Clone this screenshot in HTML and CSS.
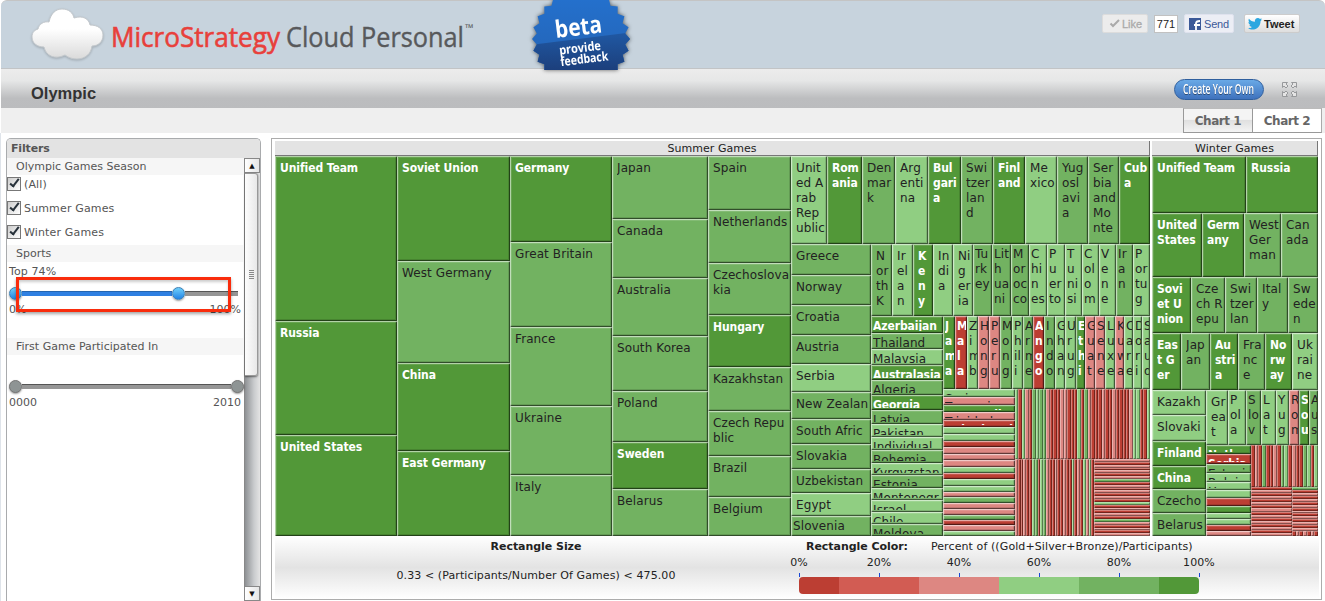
FILE: index.html
```html
<!DOCTYPE html>
<html lang="en">
<head>
<meta charset="utf-8">
<title>Olympic</title>
<link rel="stylesheet" href="styles.css">
</head>
<body>
<header class="brandbar">
  <svg class="cloud" width="74" height="54" viewBox="0 0 74 54">
    <defs><linearGradient id="cg" x1="0" y1="0" x2="0" y2="1"><stop offset="0.4" stop-color="#fff"/><stop offset="1" stop-color="#dadada"/></linearGradient></defs>
    <path d="M18 14C20 5 25 1 31 1C38 1 42 5 43 10C52 7 58 11 59 17C67 17 72 21 72 27C72 34 67 38 61 38C60 46 54 51 46 51C42 51 38 50 34 47C24 52 15 48 13 39C6 39 1 35 1 29C1 24 4 22 7 21C8 16 13 13 18 14Z" fill="url(#cg)" stroke="#c3c8cc" stroke-width="1"/>
  </svg>
  <svg class="wordmark" width="370" height="44" viewBox="0 0 370 44">
    <text x="1" y="30" class="wm red" textLength="169" lengthAdjust="spacingAndGlyphs">MicroStrategy</text>
    <text x="176" y="30" class="wm gray" textLength="178" lengthAdjust="spacingAndGlyphs">Cloud Personal</text>
    <text x="355" y="15" class="tm">™</text>
  </svg>
  <svg class="badge" width="104" height="70" viewBox="0 0 104 70">
    <defs><linearGradient id="bg1" x1="0" y1="0" x2="0" y2="1"><stop offset="0" stop-color="#2470cc"/><stop offset="1" stop-color="#2463b4"/></linearGradient>
    <linearGradient id="bg2" x1="0" y1="0" x2="0" y2="1"><stop offset="0" stop-color="#2059a4"/><stop offset="1" stop-color="#1c3f7c"/></linearGradient>
    <clipPath id="burst"><polygon id="burstShape"/></clipPath></defs>
    <g clip-path="url(#burst)"><rect width="104" height="70" fill="url(#bg1)"/><path d="M0 45L104 32V70H0Z" fill="url(#bg2)"/></g>
    <g transform="rotate(-7 52 40)" class="badgetext">
      <text x="27.500" y="35" font-size="24" textLength="47" lengthAdjust="spacingAndGlyphs">beta</text>
      <text x="29" y="52" font-size="12.500" textLength="42" lengthAdjust="spacingAndGlyphs">provide</text>
      <text x="29" y="63.500" font-size="12.500" textLength="48" lengthAdjust="spacingAndGlyphs">feedback</text>
    </g>
  </svg>
  <div class="social">
    <span class="like"><svg width="11" height="9" viewBox="0 0 11 9"><path d="M1.500 4.500L4 7L10 1" fill="none" stroke="#aaa" stroke-width="2"/></svg>Like</span>
    <span class="count">771</span>
    <span class="send"><svg width="12" height="12" viewBox="0 0 12 12"><rect width="12" height="12" fill="#3b5998"/><path d="M7 12V5.500C7 3.500 8 3 11 3M5 7H11" fill="none" stroke="#fff" stroke-width="1.800"/></svg>Send</span>
    <span class="tweet"><svg width="14" height="12" viewBox="0 0 14 12"><path d="M14 1.500L12.500 3.200C12.600 8 9 11.500 4.500 11.500C2.800 11.500 1.200 11 0 10.200C1.600 10.300 3 9.800 4 9C2.700 8.900 1.700 8.100 1.400 7H2.600C1.200 6.600.4 5.500.4 4.100L1.600 4.500C.5 3.500.2 2 .9.700C2.400 2.500 4.500 3.600 6.900 3.700C6.500 1.500 8 0 9.900 0C10.700 0 11.500.3 12 .9L13.700.3L12.900 1.700Z" fill="#2ca7e0"/></svg>Tweet</span>
  </div>
</header>
<div class="titlebar">
  <h1>Olympic</h1>
  <div class="create"><svg width="76" height="19" viewBox="0 0 76 19"><text x="2" y="14" textLength="71" lengthAdjust="spacingAndGlyphs">Create Your Own</text></svg></div>
  <svg class="expand" width="15" height="15" viewBox="0 0 15 15"><g fill="#e4e4e4" stroke="#97999b" stroke-width="1"><path id="ar" d="M.5 .5H5.500L4 2L6 4L4 6L2 4L.5 5.500Z"/><use href="#ar" transform="matrix(-1 0 0 1 15 0)"/><use href="#ar" transform="matrix(1 0 0 -1 0 15)"/><use href="#ar" transform="matrix(-1 0 0 -1 15 15)"/></g></svg>
</div>
<nav class="tabs"><span class="tab">Chart 1</span><span class="tab active">Chart 2</span></nav>
<main>
  <aside class="filters">
    <h2>Filters</h2>
    <div class="fbody">
      <div class="fcontent">
        <div class="sec">Olympic Games Season</div>
        <div class="check"><i class="box"></i>(All)</div>
        <div class="check"><i class="box"></i>Summer Games</div>
        <div class="check"><i class="box"></i>Winter Games</div>
        <div class="sec">Sports</div>
        <div class="top">Top 74%</div>
        <div class="slider blue"><b class="knob"></b><span class="filled"></span><b class="knob"></b><span class="rest"></span></div>
        <div class="ends pct"><span>0%</span><span>100%</span></div>
        <div class="sec">First Game Participated In</div>
        <div class="slider gray2"><b class="knob"></b><span class="rest"></span><b class="knob"></b></div>
        <div class="ends"><span>0000</span><span>2010</span></div>
        <div class="highlight"></div>
      </div>
      <div class="scroll"><div class="sbtn">▲</div><div class="thumb"><i></i><i></i><i></i><i></i><i></i></div><div class="sspace"></div><div class="sbtn">▼</div></div>
    </div>
  </aside>
  <section class="chart">
    <div class="maps">
      <div class="group summer"><div class="ghead">Summer Games</div><div class="map" id="summer"></div></div>
      <div class="group winter"><div class="ghead">Winter Games</div><div class="map" id="winter"></div></div>
    </div>
    <footer class="legend">
      <div class="lsize"><b>Rectangle Size</b><span>0.33 &lt; (Participants/Number Of Games) &lt; 475.00</span></div>
      <div class="lcolor">
        <div class="ltitle"><b>Rectangle Color:</b><span class="formula">Percent of ((Gold+Silver+Bronze)/Participants)</span></div>
        <div class="ticks"><span>0%</span><span>20%</span><span>40%</span><span>60%</span><span>80%</span><span>100%</span></div>
        <div class="bar"><i class="s r"></i><i class="m"></i><i class="p"></i><i class="l"></i><i class="g"></i><i class="s d"></i></div>
      </div>
    </footer>
  </section>
</main>
<script src="treemap.js"></script>
</body>
</html>
```
FILE: styles.css
```css
* { box-sizing: border-box; }
body { margin: 0; width: 1325px; height: 601px; overflow: hidden; background: #fff; font-family: "DejaVu Sans", Verdana, sans-serif; font-size: 11px; color: #555; display: flex; flex-direction: column; }
svg { display: block; }

.brandbar { margin-left: 1px; height: 69px; flex: none; background: #c7d3dd; border-top: 1px solid #c4c4c4; border-bottom: 1px solid #c2c4c6; border-radius: 6px 6px 0 0; display: flex; align-items: flex-start; }
.cloud { margin: 7px 0 0 30px; filter: drop-shadow(0 1px 1px rgba(0,0,0,.2)); }
.wordmark { margin: 16px 0 0 5px; overflow: visible; }
.wm { font-family: "Open Sans", sans-serif; font-size: 28px; }
.red { fill: #e8403b; stroke: #e8403b; stroke-width: .6px; }
.gray { fill: #58595b; stroke: #58595b; stroke-width: .4px; }
.tm { font: 11px "Open Sans", sans-serif; fill: #58595b; }
.badge { margin: -1px 0 0 49px; filter: drop-shadow(0 0 2px rgba(0,0,0,.6)); height: 70px; overflow: hidden; }
.badgetext { font-family: "Open Sans", sans-serif; font-weight: bold; fill: #fff; }
.social { margin: 13px 0 0 469px; display: flex; align-items: flex-start; font-family: "Liberation Sans", Arial, sans-serif; font-size: 11px; line-height: 18px; }
.social span { display: flex; align-items: center; border-radius: 2px; height: 19px; }
.like { width: 46px; background: #ececec; border: 1px solid #dcdcdc; color: #aaa; gap: 2px; padding-left: 6px; -webkit-text-stroke: .3px #aaa; }
.social .count { margin-left: 6px; width: 24px; height: 18px; margin-top: 1px; background: #fff; border: 1px solid #c1c1c1; color: #222; border-radius: 0; justify-content: center; }
.send { margin-left: 6px; width: 50px; background: #eceef5; border: 1px solid #dfe2ee; color: #3b5998; gap: 3px; padding-left: 4px; letter-spacing: -.2px; }
.tweet { margin-left: 10px; width: 56px; background: linear-gradient(#fff, #dedede); border: 1px solid #ccc; color: #222; font-weight: bold; gap: 2px; padding-left: 3px; }

.titlebar { margin-left: 1px; height: 39px; flex: none; background: linear-gradient(#ececec 0, #e6e7e7 30%, #bcbdbf 75%, #bbbcbe 100%); display: flex; align-items: flex-start; }
h1 { margin: 14px 0 0 30px; width: 1143px; font: bold 16.5px/20px "Liberation Sans", Arial, sans-serif; color: #333; }
.create { margin-top: 10px; width: 90px; height: 21px; border-radius: 11px; border: 1px solid #2f5f9e; background: linear-gradient(#69a9e6, #3f72bd); display: flex; justify-content: center; }
.create text { font: 600 14px "Open Sans", sans-serif; fill: #fff; }
.create svg { filter: drop-shadow(0 1px 0 rgba(0,0,0,.4)); }
.expand { margin: 13px 0 0 18px; }

.tabs { height: 25px; flex: none; margin-left: 1px; background: #efefef; display: flex; padding-left: 1182px; font-size: 12px; font-weight: bold; color: #666; }
.tab { width: 70px; height: 25px; line-height: 24px; text-align: center; background: linear-gradient(#f4f4f4 0, #f4f4f4 45%, #e0e0e0 50%, #f4f4f4 100%); border: 1px solid #999; border-top-color: #bbb; letter-spacing: -.45px; }
.tab.active { width: 69px; background: #fff; border-left: 0; border-right-color: #aaa; }

main { flex: 1; display: flex; align-items: flex-start; border-left: 1px solid #dfe4ea; padding: 5px 0 0 5px; min-height: 0; }
.filters { width: 255px; height: 463px; border: 1px solid #a9abad; border-bottom: 0; border-radius: 5px 5px 0 0; overflow: hidden; display: flex; flex-direction: column; background: #fff; flex: none; }
h2 { margin: 0; height: 19px; flex: none; background: #e3e3e3; font-size: 11px; line-height: 19px; padding-left: 4px; color: #555; letter-spacing: -.15px; }
.fbody { flex: 1; display: flex; min-height: 0; }
.fcontent { width: 237px; position: relative; letter-spacing: .15px; }
.sec { height: 17px; line-height: 18px; padding-left: 9px; background: #f6f6f6; margin-bottom: 2px; letter-spacing: 0; }
.sec + .gray2 { letter-spacing: 0; }
.check { height: 24px; display: flex; align-items: flex-start; line-height: 15px; gap: 3px; }
.check .box { width: 14px; height: 14px; border: 1px solid #777; background: linear-gradient(135deg, #ccc, #fff); position: relative; }
.check .box::after { content: ""; position: absolute; left: 4px; top: -1px; width: 3px; height: 8px; border: solid #27313a; border-width: 0 2px 2px 0; transform: rotate(38deg); }
.check + .sec { margin-top: -4px; }
.top { padding-left: 2px; line-height: 15px; letter-spacing: .1px; }
.slider { display: flex; align-items: center; height: 14px; margin: 7px 0 0 2px; }
.knob { width: 13px; height: 13px; border-radius: 50%; flex: none; border: 1px solid #777; background: #8e9494; box-shadow: 0 1px 2px rgba(0,0,0,.4); }
.blue .knob { background: linear-gradient(#6fd0fb, #2283e6); border-color: #3a7fb5; }
.filled { width: 150px; height: 5px; background: #2f80e2; border-top: 1px solid #2565b0; }
.rest { flex: 1; height: 5px; background: #969696; border-top: 1px solid #555; }
.blue { padding-right: 6px; }
.ends { display: flex; justify-content: space-between; padding: 0 3px 0 2px; line-height: 15px; margin-top: 2px; letter-spacing: 0; }
.pct { margin-bottom: 21px; }
.gray2 { margin-top: 24px; margin-bottom: 1px; }
.highlight { position: absolute; left: 9px; top: 119px; width: 215px; height: 35px; border: 3px solid #f92c0c; box-shadow: 0 2px 3px rgba(0,0,0,.35), inset 0 2px 3px rgba(0,0,0,.2); }
.scroll { width: 16px; display: flex; flex-direction: column; background: linear-gradient(90deg, #8e9194, #c9cbcd 60%, #e4e4e4); border-left: 1px solid #888; }
.sbtn { height: 15px; flex: none; border: 1px solid #888; border-left: 0; background: linear-gradient(90deg, #fff, #e6e6e6); font-size: 7px; line-height: 14px; text-align: center; color: #111; }
.thumb { width: 13px; height: 203px; border: 1px solid #999; border-left: 0; border-radius: 0 3px 3px 0; background: linear-gradient(90deg, #fdfdfd, #e8e8e8); box-shadow: 0 1px 2px rgba(0,0,0,.5); display: flex; flex-direction: column; gap: 1px; align-items: center; justify-content: center; }
.thumb i { width: 5px; height: 1px; background: #888; }
.sspace { flex: 1; }

.chart { margin-left: 10px; width: 1051px; height: 462px; flex: none; border: 1px solid #acacac; padding: 2px 2px 0 3px; display: flex; flex-direction: column; color: #222; }
.maps { display: flex; gap: 2px; height: 395px; flex: none; }
.group { display: flex; flex-direction: column; }
.summer { width: 875px; }
.winter { width: 166px; }
.ghead { height: 15px; background: #e3e3e3; border-bottom: 1px solid #777; border-right: 1px solid #777; text-align: center; font-size: 11px; line-height: 15px; flex: none; letter-spacing: .05px; }
.map { flex: 1; display: flex; min-height: 0; font-size: 12px; line-height: 15px; }
.cols, .rows { display: flex; min-width: 0; min-height: 0; overflow: hidden; }
.rows { flex-direction: column; }
.cell { min-width: 0; min-height: 0; overflow: hidden; display: flex; box-shadow: inset 1px 1px 0 rgba(255,255,255,.5), inset -1px -1px 0 rgba(0,0,0,.5), inset 2px 2px 0 rgba(255,255,255,.12), inset -2px -2px 0 rgba(0,0,0,.13); }
.label { overflow: hidden; white-space: pre; flex: 1; letter-spacing: .1px; margin: 5px 1px 1px 5px; }
.bold .label { letter-spacing: -.08px; }
.tight .label { margin: 3px 1px 2px 2px; }
.stripe { box-shadow: inset 1px 1px 0 rgba(255,255,255,.35), inset -1px -1px 0 rgba(0,0,0,.4); }
.bold { font-family: "DejaVu Sans Condensed", "DejaVu Sans", sans-serif; font-stretch: condensed; font-weight: bold; color: #fff; }
.d { background: #529838; }
.g { background: #72b261; }
.l { background: #90ce82; }
.p { background: #dd8782; }
.m { background: #d25c53; }
.r { background: #bc3e33; }

.legend { flex: 1; display: flex; background: linear-gradient(#fff, #e3e3e3 50%, #fff); letter-spacing: .1px; }
.lsize { width: 522px; display: flex; flex-direction: column; align-items: center; }
.lsize b, .ltitle { line-height: 22px; height: 20px; letter-spacing: -.05px; }
.lsize span { line-height: 20px; margin-top: 10px; }
.lcolor { width: 404px; padding: 0 2px; }
.ltitle { display: flex; padding-left: 7px; gap: 23px; }
.formula { letter-spacing: .1px; }
.ticks { display: flex; justify-content: space-between; margin: -4px -20px 0; }
.ticks span { width: 40px; height: 25px; line-height: 21px; text-align: center; background: linear-gradient(#1747d6, #1747d6) 50% 100% / 1px 4px no-repeat; }
.bar { display: flex; height: 17px; border-radius: 4px; overflow: hidden; }
.bar i { flex: 80; }
.bar .s { flex: 40; }
```
FILE: treemap.js
```js
// Leaf: [end, colour, label, style]; branch: {end, dir, kids}. Each "end" is the
// edge of the item along its parent's axis, measured in the map's units.
const leaf = (end, c, t = '', k = '') => ({ end, c, t, k });
const box = (end, dir, start, ...kids) => ({ end, dir, start, kids });
const list = (text, k = '') => text.split(';').map(s => {
  const [end, c, t] = s.split(',');
  return leaf(+end, c, (t || '').replace(/\//g, '\n'), k);
});
const stripes = (end, dir, colours) =>
  box(end, dir, 0, ...[...colours].map((c, i) => leaf(i + 1, c, '', 'stripe')));

const summer = box(1150, 'cols', 275,
  box(397, 'rows', 156, ...list('321,d,Unified Team;435,d,Russia;536,d,United States')),
  box(510, 'rows', 156, ...list('261,d,Soviet Union;363,g,West Germany;451,d,China;536,d,East Germany')),
  box(612, 'rows', 156, ...list('242,d,Germany;327,g,Great Britain;406,g,France;475,g,Ukraine;536,g,Italy')),
  box(708, 'rows', 156, ...list('219,g,Japan;278,g,Canada;336,g,Australia;391,g,South Korea;442,g,Poland;489,d,Sweden;536,g,Belarus')),
  box(791, 'rows', 156, ...list('210,g,Spain;263,g,Netherlands;315,g,Czechoslova/kia;367,d,Hungary;411,g,Kazakhstan;456,g,Czech Repu/blic;497,g,Brazil;536,g,Belgium')),
  box(1150, 'rows', 156,
    box(244, 'cols', 791, ...list('827,l,Unit/ed A/rab/Rep/ublic;862,d,Rom/ania;895,g,Den/mar/k;928,l,Arg/enti/na;961,d,Bul/gari/a;993,g,Swi/tzer/lan/d;1025,d,Finl/and;1057,l,Me/xico;1088,g,Yug/osl/avi/a;1119,g,Ser/bia/and/Mo/nte;1150,d,Cub/a')),
    box(536, 'cols', 791,
      box(871, 'rows', 244, ...list('275,g,Greece;305,g,Norway;335,g,Croatia;364,g,Austria;392,l,Serbia;419,g,New Zealan;444,g,South Afric;469,g,Slovakia;493,g,Uzbekistan;516,l,Egypt'), leaf(536, 'g', 'Slovenia', 'tight')),
      box(1150, 'rows', 244,
        box(316, 'cols', 871, ...list('892,g,N/or/th/K;913,l,Ir/el/a/n;933,d,K/e/n/y;953,l,In/di/a;973,l,Ni/g/er/ia'), ...list('992,g,Tu/rk/ey;1011,g,Lit/h/ua/ni;1029,g,M/or/oc/co;1047,l,C/hi/n/es;1065,l,P/u/er/to;1082,l,T/u/ni/si;1099,l,C/ol/o/m;1116,l,V/e/n/e;1133,g,Ir/a/n;1150,l,P/or/tu/g', 'tight')),
        box(536, 'cols', 871,
          box(943, 'rows', 316, ...list('333,d,Azerbaijan;349,g,Thailand;365,l,Malaysia;380,d,Australasia;395,g,Algeria;410,d,Georgia;424,g,Latvia;437,l,Pakistan;450,l,Individual;463,g,Bohemia;475,l,Kyrgyzstan;488,g,Estonia;500,l,Montenegr;512,l,Israel;524,l,Chile;536,g,Moldova', 'tight')),
          box(1150, 'rows', 316,
            box(389, 'cols', 943, ...list('955,d,J/a/m/a;967,r,M/a/l/a;978,l,Z/i/m/b;989,p,H/o/n/g;1000,p,P/e/r/u;1012,g,M/o/n/g;1023,l,P/h/il/i;1033,g,A/r/m/e;1044,r,A/n/g/o;1055,g,I/n/d/o;1065,l,G/h/a/n;1076,l,U/r/u/g;1085,d,E/t/h/i;1095,p,G/u/a/t;1105,p,S/e/n/e;1115,l,L/u/x/e;1124,p,K/u/w/a;1133,l,C/a/r/e;1142,l,D/o/r/i;1150,l,S/a/u/d', 'tight')),
            box(536, 'cols', 943,
              box(1015, 'rows', 389, ...list('397,l,Syria;405,p,Tanzania;412,d,West Indies;420,p,Trinidad;427,r,United Arab;434,l;441,l;447,r;454,p;460,p;467,p;473,l;479,r;486,l;492,l;497,p;503,g;509,p;515,p;520,g;525,r;531,p;536,l', 'tight')),
              box(1150, 'rows', 389,
                stripes(459, 'cols', 'lrlprglggprrrpprrrlrgprrrprrprrrrpllrrl'),
                box(536, 'cols', 1015,
                  stripes(1094, 'cols', 'prrprrlgrlgprrprrprrlrprlplr'),
                  stripes(1150, 'rows', 'prprprpgrprprprlrprprgprprp'))))))))));

const winter = box(1318, 'rows', 156,
  box(213, 'cols', 1152, ...list('1246,d,Unified Team;1318,d,Russia')),
  box(276.5, 'cols', 1152, ...list('1202,d,United/States;1244,d,Germ/any;1281,g,West/Ger/man;1318,g,Can/ada')),
  box(333, 'cols', 1152, ...list('1191,d,Sovi/et U/nion;1225,g,Cze/ch R/epu;1257,g,Swi/tzer/lan;1288,g,Ital/y;1318,g,Sw/ede/n')),
  box(389.5, 'cols', 1152, ...list('1181,d,Eas/t G/er;1210,g,Jap/an;1238,d,Au/stri/a;1265,g,Fra/nc/e;1292,d,No/rw/ay;1318,l,Uk/rai/ne')),
  box(536, 'cols', 1152,
    box(1206, 'rows', 389.5, ...list('415,l,Kazakh;441,l,Slovaki;465.5,d,Finland;489,d,China;513,g,Czecho;536,g,Belarus')),
    box(1318, 'rows', 389.5,
      box(445, 'cols', 1206, leaf(1228, 'l', 'Gr\nea\nt'), ...list('1246,l,P/ol/a;1261,g,S/lo/v;1276,l,L/a/t;1289,l,Y/u/g;1299,p,R/o/m;1309,d,S/o/u;1318,g,A/u/s', 'tight')),
      box(536, 'cols', 1206,
        box(1251, 'rows', 445, ...list('454,d,Netherl;464,r,Serbia;473,g,Estonia;482,l,Belgium;490,l,Hungary;498,l;506,r;513,d;519,l;525,l;531,r;536,p', 'tight')),
        box(1318, 'rows', 445,
          stripes(487, 'cols', 'rprgrrprglrprrglrl'),
          box(536, 'cols', 1251,
            stripes(1292, 'rows', 'rprprprprprprprp'),
            box(1318, 'rows', 487,
              stripes(531, 'rows', 'grprprprprprprp'),
              stripes(536, 'cols', 'rprprpr'))))))));

function build(node, size) {
  const el = document.createElement('div');
  el.style.flex = size + ' 1 0px';
  if (node.kids) {
    el.className = node.dir;
    let at = node.start;
    for (const kid of node.kids) {
      el.append(build(kid, kid.end - at));
      at = kid.end;
    }
  } else {
    el.className = `cell ${node.c} ${node.k}` + ('dr'.includes(node.c) ? ' bold' : '');
    if (node.t) {
      const label = document.createElement('div');
      label.className = 'label';
      label.textContent = node.t;
      el.append(label);
    }
  }
  return el;
}
document.getElementById('summer').append(build(summer, 1));
document.getElementById('winter').append(build(winter, 1));

// Starburst outline of the beta badge.
const teeth = 26, points = [];
for (let i = 0; i < teeth * 2; i++) {
  const a = Math.PI * i / teeth, r = i % 2 ? 44.5 : 49;
  points.push((52 + r * Math.cos(a)).toFixed(1) + ',' + (39 + r * Math.sin(a)).toFixed(1));
}
document.getElementById('burstShape').setAttribute('points', points.join(' '));
```
